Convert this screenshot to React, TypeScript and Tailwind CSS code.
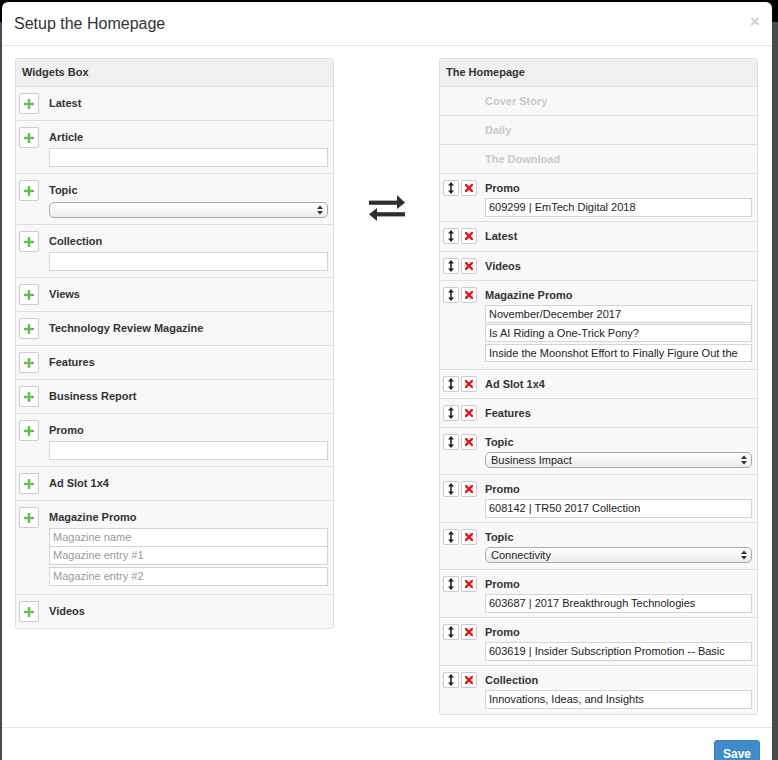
import React from 'react';

const font = { fontFamily: '"Liberation Sans", Arial, Helvetica, sans-serif' };

const PlusButton = () => (
  <div className="w-[20px] h-[21px] shrink-0 bg-white border border-[#ccc] rounded-[2px] flex items-center justify-center">
    <svg width="10" height="10" viewBox="0 0 10 10">
      <rect x="3.8" y="0" width="2.4" height="10" fill="#5fc24a" />
      <rect x="0" y="3.8" width="10" height="2.4" fill="#5fc24a" />
    </svg>
  </div>
);

const SortButton = () => (
  <div className="w-[16px] h-[16px] shrink-0 bg-white border border-[#ccc] rounded-[2px] flex items-center justify-center">
    <svg width="6" height="12" viewBox="0 0 6 12">
      <polygon points="3,0 6,3.5 0,3.5" fill="#222" />
      <rect x="2.2" y="3" width="1.6" height="6" fill="#222" />
      <polygon points="3,12 6,8.5 0,8.5" fill="#222" />
    </svg>
  </div>
);

const DeleteButton = () => (
  <div className="w-[16px] h-[16px] shrink-0 bg-white border border-[#ccc] rounded-[2px] flex items-center justify-center">
    <svg width="8" height="8" viewBox="0 0 8 8">
      <path d="M1 1 L7 7 M7 1 L1 7" stroke="#ee1111" strokeWidth="2.4" strokeLinecap="square" />
    </svg>
  </div>
);

const TextInput = ({
  value,
  placeholder,
  short,
  className = '',
}: {
  value?: string;
  placeholder?: string;
  short?: boolean;
  className?: string;
}) => (
  <div
    className={`${short ? 'h-[18px] leading-[16px]' : 'h-[19px] leading-[17px]'} bg-white border border-[#d4d4d4] px-[3px] text-[11px] whitespace-nowrap overflow-hidden ${value ? 'text-[#222]' : 'text-[#999]'} ${className}`}
  >
    {value || placeholder || ''}
  </div>
);

const SelectBox = ({ value, className = '' }: { value?: string; className?: string }) => (
  <div className={`h-[16px] rounded-[5px] border border-[#a9a9a9] bg-gradient-to-b from-white to-[#ececec] flex items-center pl-[5px] pr-[4px] text-[11px] text-[#222] ${className}`}>
    <span className="flex-1 leading-[14px]">{value}</span>
    <svg width="6" height="10" viewBox="0 0 6 10">
      <polygon points="3,0.5 6,4 0,4" fill="#333" />
      <polygon points="3,9.5 6,6 0,6" fill="#333" />
    </svg>
  </div>
);

type Widget = { label: string; kind?: 'input' | 'select' | 'magazine' };

const widgets: Widget[] = [
  { label: 'Latest' },
  { label: 'Article', kind: 'input' },
  { label: 'Topic', kind: 'select' },
  { label: 'Collection', kind: 'input' },
  { label: 'Views' },
  { label: 'Technology Review Magazine' },
  { label: 'Features' },
  { label: 'Business Report' },
  { label: 'Promo', kind: 'input' },
  { label: 'Ad Slot 1x4' },
  { label: 'Magazine Promo', kind: 'magazine' },
  { label: 'Videos' },
];

type Item = { label: string; input?: string; select?: string; entries?: string[]; pad?: string };

const homepage: Item[] = [
  { label: 'Promo', input: '609299 | EmTech Digital 2018' },
  { label: 'Latest', pad: 'pb-[7px]' },
  { label: 'Videos' },
  {
    label: 'Magazine Promo',
    entries: ['November/December 2017', 'Is AI Riding a One-Trick Pony?', 'Inside the Moonshot Effort to Finally Figure Out the'],
    pad: 'pb-[7px]',
  },
  { label: 'Ad Slot 1x4' },
  { label: 'Features' },
  { label: 'Topic', select: 'Business Impact' },
  { label: 'Promo', input: '608142 | TR50 2017 Collection' },
  { label: 'Topic', select: 'Connectivity' },
  { label: 'Promo', input: '603687 | 2017 Breakthrough Technologies' },
  { label: 'Promo', input: '603619 | Insider Subscription Promotion -- Basic' },
  { label: 'Collection', input: 'Innovations, Ideas, and Insights', pad: 'pb-[5px]' },
];

const fixed = ['Cover Story', 'Daily', 'The Download'];

const WidgetRow = ({ w }: { w: Widget }) => (
  <div className="flex border-t border-[#ddd] pl-[3px] pr-[5px] pt-[6px] pb-[6px]">
    <PlusButton />
    <div className="flex-1 ml-[10px] min-w-0">
      <div className="h-[21px] leading-[21px] text-[11px] font-bold text-[#333]">{w.label}</div>
      {w.kind === 'input' && <TextInput />}
      {w.kind === 'select' && <SelectBox className="mt-px" />}
      {w.kind === 'magazine' && (
        <div className="pb-[2px]">
          <TextInput placeholder="Magazine name" />
          <TextInput placeholder="Magazine entry #1" className="-mt-px" />
          <TextInput placeholder="Magazine entry #2" className="mt-[2px]" />
        </div>
      )}
    </div>
  </div>
);

const HomeRow = ({ item }: { item: Item }) => (
  <div className={`flex border-t border-[#ddd] pl-[3px] pr-[5px] pt-[6px] ${item.pad ?? (item.input ? 'pb-[4px]' : 'pb-[6px]')}`}>
    <div className="flex gap-[2px] shrink-0">
      <SortButton />
      <DeleteButton />
    </div>
    <div className="flex-1 ml-[8px] min-w-0">
      <div className="h-[16px] leading-[16px] text-[11px] font-bold text-[#333]">{item.label}</div>
      {item.input && <TextInput value={item.input} className="mt-[2px]" />}
      {item.select && <SelectBox value={item.select} className="mt-[2px]" />}
      {item.entries && (
        <div className="mt-[2px] flex flex-col gap-px">
          <TextInput value={item.entries[0]} short />
          <TextInput value={item.entries[1]} short />
          <TextInput value={item.entries[2]} short className="mt-px" />
        </div>
      )}
    </div>
  </div>
);

const ExchangeIcon = () => (
  <svg width="36" height="26" viewBox="0 0 36 26">
    <rect x="0" y="5.6" width="29" height="4.2" fill="#2f2f2f" />
    <polygon points="28,0 36,7.7 28,14" fill="#2f2f2f" />
    <rect x="7" y="17.2" width="29" height="4.2" fill="#2f2f2f" />
    <polygon points="8,13 0,19.3 8,26" fill="#2f2f2f" />
  </svg>
);

export default function App() {
  return (
    <div
      className="w-[778px] h-[760px] overflow-hidden bg-[linear-gradient(to_bottom,#000_0px,#000_22px,#4a4a4a_22px)]"
      style={font}
    >
      <div className="ml-[2px] mt-[2px] w-[770px] h-[800px] bg-white rounded-t-[6px]">
        {/* Header */}
        <div className="h-[44px] border-b border-[#e5e5e5] flex items-center pl-[12px] pr-[12px]">
          <h1 className="flex-1 text-[16px] text-[#333] leading-none">Setup the Homepage</h1>
          <span className="text-[17px] font-bold text-[#cfcfcf] leading-none -mt-[5px]">×</span>
        </div>

        {/* Body */}
        <div className="flex items-start pl-[13px] pr-[14px] pt-[12px] pb-[12px] border-b border-[#e5e5e5]">
          <div className="w-[319px] border border-[#ddd] rounded-[3px] bg-[#f8f8f8] overflow-hidden">
            <div className="h-[27px] bg-[#f0f0f0] pl-[6px] flex items-center text-[11px] font-bold text-[#333]">
              Widgets Box
            </div>
            {widgets.map((w, i) => (
              <WidgetRow key={i} w={w} />
            ))}
          </div>

          <div className="flex-1 flex justify-center pt-[137px]">
            <ExchangeIcon />
          </div>

          <div className="w-[319px] border border-[#ddd] rounded-[3px] bg-[#f8f8f8] overflow-hidden">
            <div className="h-[27px] bg-[#f0f0f0] pl-[6px] flex items-center text-[11px] font-bold text-[#333]">
              The Homepage
            </div>
            {fixed.map((f) => (
              <div key={f} className="h-[29px] border-t border-[#ddd] pl-[45px] flex items-center text-[11px] font-bold text-[#c9c9c9]">
                {f}
              </div>
            ))}
            {homepage.map((item, i) => (
              <HomeRow key={i} item={item} />
            ))}
          </div>
        </div>

        {/* Footer */}
        <div className="flex justify-end pr-[12px] pt-[12px]">
          <button className="w-[46px] h-[28px] rounded-[3px] bg-[#428bca] border border-[#357ebd] text-white text-[12px] font-bold">
            Save
          </button>
        </div>
      </div>
    </div>
  );
}
